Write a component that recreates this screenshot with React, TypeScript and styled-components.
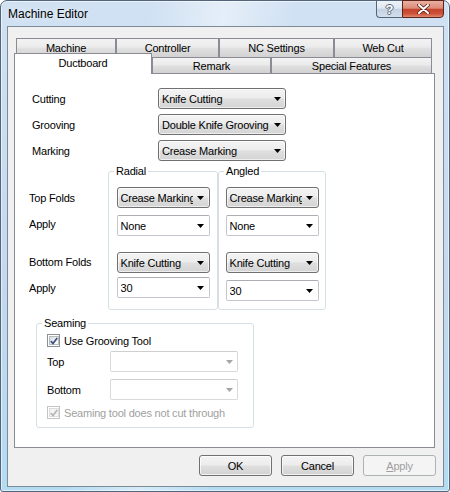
import React from "react";
import styled, { createGlobalStyle, css } from "styled-components";

const GlobalStyle = createGlobalStyle`
  html, body {
    margin: 0;
    padding: 0;
    background: #ffffff;
  }
  body {
    font-family: "Liberation Sans", Arial, sans-serif;
    font-size: 11px;
    color: #000;
  }
  * {
    box-sizing: border-box;
  }
`;

const Window = styled.div`
  width: 450px;
  height: 492px;
  border: 1px solid #52657b;
  border-radius: 7px 7px 3px 3px;
  background:
    linear-gradient(100deg, rgba(255, 255, 255, 0) 28%, rgba(255, 255, 255, 0.45) 42%, rgba(255, 255, 255, 0) 56%),
    linear-gradient(180deg, #d0e1f3 0%, #c3d8ee 60%, #b3dcf1 100%);
  box-shadow: inset 0 0 0 1px rgba(255, 255, 255, 0.55);
  display: flex;
  flex-direction: column;
`;

const TitleBar = styled.div`
  height: 25px;
  flex: none;
  display: flex;
  justify-content: space-between;
  align-items: flex-start;
  padding: 0 5px 0 7px;
`;

const Title = styled.div`
  align-self: center;
  font-size: 12px;
  color: #000;
  text-shadow: 0 0 8px rgba(255, 255, 255, 0.95);
`;

const CaptionButtons = styled.div`
  display: flex;
  margin-top: -1px;
`;

const CaptionButton = styled.div<{ $close?: boolean }>`
  height: 18px;
  display: flex;
  align-items: center;
  justify-content: center;
  ${(p) =>
    p.$close
      ? css`
          width: 42px;
          border: 1px solid #5d2319;
          border-radius: 0 0 4px 0;
          background: linear-gradient(180deg, #eab0a2 0%, #dc8c79 45%, #c4432d 52%, #cf523b 80%, #e08a72 100%);
        `
      : css`
          width: 26px;
          border: 1px solid #55657a;
          border-right: none;
          border-radius: 0 0 0 4px;
          background: linear-gradient(180deg, #eef3f9 0%, #dfe8f3 45%, #c3d2e4 52%, #d3dfec 100%);
        `}
`;

const HelpGlyph = styled.span`
  font: bold 13px "Liberation Sans", Arial, sans-serif;
  color: #fff;
  text-shadow: -1px 0 #5a6878, 1px 0 #5a6878, 0 -1px #5a6878, 0 1px #5a6878;
  line-height: 13px;
`;

const Client = styled.div`
  flex: 1;
  margin: 0 5px 4px 6px;
  border: 1px solid #7d8a98;
  background: #f0f0f0;
  display: flex;
  flex-direction: column;
  padding: 11px 8px 0 6px;
`;

const TabRow = styled.div<{ $back?: boolean }>`
  display: flex;
  flex: none;
  height: ${(p) => (p.$back ? 19 : 16)}px;
  padding-left: ${(p) => (p.$back ? 2 : 0)}px;
`;

const Tab = styled.div<{ $w: number; $active?: boolean }>`
  width: ${(p) => p.$w}px;
  border: 1px solid #898c95;
  border-bottom: none;
  display: flex;
  align-items: center;
  justify-content: center;
  letter-spacing: -0.2px;
  background: linear-gradient(180deg, #f3f3f3 0%, #ebebeb 45%, #dfdfdf 55%, #d2d2d2 100%);
  ${(p) =>
    p.$active &&
    css`
      background: #ffffff;
      margin-top: -4px;
      height: 21px;
      padding-bottom: 2px;
      position: relative;
      z-index: 1;
    `}
`;

const Panel = styled.div`
  flex: none;
  width: 421px;
  height: 375px;
  border: 1px solid #898c95;
  background: #ffffff;
  padding: 14px 0 0 14px;
`;

const FieldGrid = styled.div<{ $label: number; $field: number; $gap: number }>`
  display: grid;
  grid-template-columns: ${(p) => p.$label}px ${(p) => p.$field}px;
  row-gap: ${(p) => p.$gap}px;
  align-items: center;
`;

const TopFields = styled(FieldGrid)`
  margin-left: 3px;
`;

const Label = styled.span<{ $disabled?: boolean }>`
  letter-spacing: -0.2px;
  white-space: nowrap;
  color: ${(p) => (p.$disabled ? "#a0a0a0" : "#000")};
`;

const ComboBox = styled.div<{ $w: number; $kind: "list" | "edit"; $disabled?: boolean; $mt?: number }>`
  width: ${(p) => p.$w}px;
  height: 21px;
  flex: none;
  display: flex;
  align-items: center;
  margin-top: ${(p) => p.$mt ?? 0}px;
  padding-left: 3px;
  ${(p) =>
    p.$kind === "list"
      ? css`
          border: 1px solid #707070;
          border-radius: 3px;
          background: linear-gradient(180deg, #f4f4f4 0%, #ececec 48%, #dfdfdf 52%, #d4d4d4 100%);
          box-shadow: inset 0 0 0 1px rgba(255, 255, 255, 0.6);
        `
      : css`
          border: 1px solid ${p.$disabled ? "#d9d9d9" : "#c3c7cd"};
          border-top-color: ${p.$disabled ? "#cfcfcf" : "#abadb3"};
          border-radius: 2px;
          background: #ffffff;
        `}
`;

const ComboText = styled.span`
  flex: 1;
  overflow: hidden;
  white-space: nowrap;
  letter-spacing: -0.2px;
`;

const ComboArrow = styled.span<{ $disabled?: boolean }>`
  width: 16px;
  flex: none;
  display: flex;
  justify-content: center;
  color: ${(p) => (p.$disabled ? "#a6a6a6" : "#000")};
`;

const GroupRow = styled.div`
  display: flex;
  margin-top: 4px;
`;

const LabelColumn = styled.div`
  width: 79px;
  display: flex;
  flex-direction: column;
  padding-top: 22px;
`;

const LabelRow = styled.div<{ $mt: number }>`
  height: 21px;
  display: flex;
  align-items: center;
  margin-top: ${(p) => p.$mt}px;
  letter-spacing: -0.2px;
`;

const Group = styled.fieldset<{ $w: number; $ml?: number; $mt?: number }>`
  width: ${(p) => p.$w}px;
  min-width: 0;
  margin: ${(p) => p.$mt ?? 0}px 0 0 ${(p) => p.$ml ?? 0}px;
  padding: 0;
  border: 1px solid #d5dfe5;
  border-radius: 3px;
`;

const Legend = styled.legend`
  margin-left: 5px;
  padding: 0 2px;
  line-height: 13px;
  font-size: 11px;
  letter-spacing: -0.2px;
`;

const GroupBody = styled.div`
  display: flex;
  flex-direction: column;
  align-items: center;
  padding: 9px 0 8px;
`;

const SeamBody = styled.div`
  display: flex;
  flex-direction: column;
  padding: 3px 0 7px 10px;
`;

const CheckRow = styled.div<{ $mt?: number }>`
  height: 15px;
  display: flex;
  align-items: center;
  gap: 4px;
  margin-top: ${(p) => p.$mt ?? 0}px;
`;

const CheckBox = styled.span<{ $disabled?: boolean }>`
  width: 13px;
  height: 13px;
  flex: none;
  border: 1px solid ${(p) => (p.$disabled ? "#c4c4c4" : "#8e8f8f")};
  padding: 1px;
  background: #fff;
  display: flex;
`;

const CheckInner = styled.span<{ $disabled?: boolean }>`
  flex: 1;
  display: flex;
  align-items: center;
  justify-content: center;
  border: 1px solid ${(p) => (p.$disabled ? "#dcdcdc" : "#b7bcc2")};
  background: ${(p) =>
    p.$disabled ? "#f4f4f4" : "linear-gradient(135deg, #d9dcdf 0%, #f0f1f2 60%, #ffffff 100%)"};
`;

const SeamGrid = styled(FieldGrid)`
  margin-top: 3px;
`;

const ButtonRow = styled.div`
  display: flex;
  justify-content: flex-end;
  gap: 9px;
  margin: 7px -1px 0 0;
`;

const Button = styled.button<{ $disabled?: boolean }>`
  width: 73px;
  height: 21px;
  padding: 0;
  font: 11px "Liberation Sans", Arial, sans-serif;
  letter-spacing: -0.2px;
  border-radius: 3px;
  ${(p) =>
    p.$disabled
      ? css`
          border: 1px solid #adb2b5;
          background: #f4f4f4;
          color: #a0a0a0;
        `
      : css`
          border: 1px solid #707070;
          background: linear-gradient(180deg, #f4f4f4 0%, #ececec 48%, #dfdfdf 52%, #d2d2d2 100%);
          box-shadow: inset 0 0 0 1px rgba(255, 255, 255, 0.7);
          color: #000;
        `}
`;

const Arrow = () => (
  <svg width="7" height="4" viewBox="0 0 7 4">
    <path d="M0 0H7L3.5 4Z" fill="currentColor" />
  </svg>
);

const Combo: React.FC<{ w: number; kind: "list" | "edit"; text?: string; disabled?: boolean; mt?: number }> = ({
  w,
  kind,
  text,
  disabled,
  mt,
}) => (
  <ComboBox $w={w} $kind={kind} $disabled={disabled} $mt={mt}>
    <ComboText>{text}</ComboText>
    <ComboArrow $disabled={disabled}>
      <Arrow />
    </ComboArrow>
  </ComboBox>
);

const Check: React.FC<{ disabled?: boolean }> = ({ disabled }) => (
  <CheckBox $disabled={disabled}>
    <CheckInner $disabled={disabled}>
      <svg width="8" height="8" viewBox="0 0 8 8">
        <path
          d="M0.8 4.2L3 6.5L7.2 1"
          fill="none"
          stroke={disabled ? "#b4b4b4" : "#3b4f7e"}
          strokeWidth="1.7"
        />
      </svg>
    </CheckInner>
  </CheckBox>
);

const App: React.FC = () => {
  return (
    <>
      <GlobalStyle />
      <Window>
        <TitleBar>
          <Title>Machine Editor</Title>
          <CaptionButtons>
            <CaptionButton>
              <HelpGlyph>?</HelpGlyph>
            </CaptionButton>
            <CaptionButton $close>
              <svg width="13" height="10" viewBox="0 0 13 10">
                <path d="M2 1L11 9M11 1L2 9" stroke="#5b2218" strokeWidth="3.6" strokeLinecap="round" />
                <path d="M2 1L11 9M11 1L2 9" stroke="#ffffff" strokeWidth="2" strokeLinecap="round" />
              </svg>
            </CaptionButton>
          </CaptionButtons>
        </TitleBar>

        <Client>
          <TabRow $back>
            <Tab $w={100}>Machine</Tab>
            <Tab $w={103}>Controller</Tab>
            <Tab $w={115}>NC Settings</Tab>
            <Tab $w={98}>Web Cut</Tab>
          </TabRow>
          <TabRow>
            <Tab $w={138} $active>
              Ductboard
            </Tab>
            <Tab $w={119}>Remark</Tab>
            <Tab $w={161}>Special Features</Tab>
          </TabRow>

          <Panel>
            <TopFields $label={126} $field={128} $gap={5}>
              <Label>Cutting</Label>
              <Combo w={128} kind="list" text="Knife Cutting" />
              <Label>Grooving</Label>
              <Combo w={128} kind="list" text="Double Knife Grooving" />
              <Label>Marking</Label>
              <Combo w={128} kind="list" text="Crease Marking" />
            </TopFields>

            <GroupRow>
              <LabelColumn>
                <LabelRow $mt={0}>Top Folds</LabelRow>
                <LabelRow $mt={5}>Apply</LabelRow>
                <LabelRow $mt={17}>Bottom Folds</LabelRow>
                <LabelRow $mt={5}>Apply</LabelRow>
              </LabelColumn>
              <Group $w={110}>
                <Legend>Radial</Legend>
                <GroupBody>
                  <Combo w={93} kind="list" text="Crease Marking" />
                  <Combo w={93} kind="edit" text="None" mt={7} />
                  <Combo w={93} kind="list" text="Knife Cutting" mt={16} />
                  <Combo w={93} kind="edit" text="30" mt={4} />
                </GroupBody>
              </Group>
              <Group $w={108}>
                <Legend>Angled</Legend>
                <GroupBody>
                  <Combo w={93} kind="list" text="Crease Marking" />
                  <Combo w={93} kind="edit" text="None" mt={7} />
                  <Combo w={93} kind="list" text="Knife Cutting" mt={16} />
                  <Combo w={93} kind="edit" text="30" mt={7} />
                </GroupBody>
              </Group>
            </GroupRow>

            <Group $w={218} $ml={7} $mt={7}>
              <Legend>Seaming</Legend>
              <SeamBody>
                <CheckRow>
                  <Check />
                  <Label>Use Grooving Tool</Label>
                </CheckRow>
                <SeamGrid $label={63} $field={128} $gap={7}>
                  <Label>Top</Label>
                  <Combo w={128} kind="edit" disabled />
                  <Label>Bottom</Label>
                  <Combo w={128} kind="edit" disabled />
                </SeamGrid>
                <CheckRow $mt={5}>
                  <Check disabled />
                  <Label $disabled>Seaming tool does not cut through</Label>
                </CheckRow>
              </SeamBody>
            </Group>
          </Panel>

          <ButtonRow>
            <Button>OK</Button>
            <Button>Cancel</Button>
            <Button $disabled>
              <u>A</u>pply
            </Button>
          </ButtonRow>
        </Client>
      </Window>
    </>
  );
};

export default App;
